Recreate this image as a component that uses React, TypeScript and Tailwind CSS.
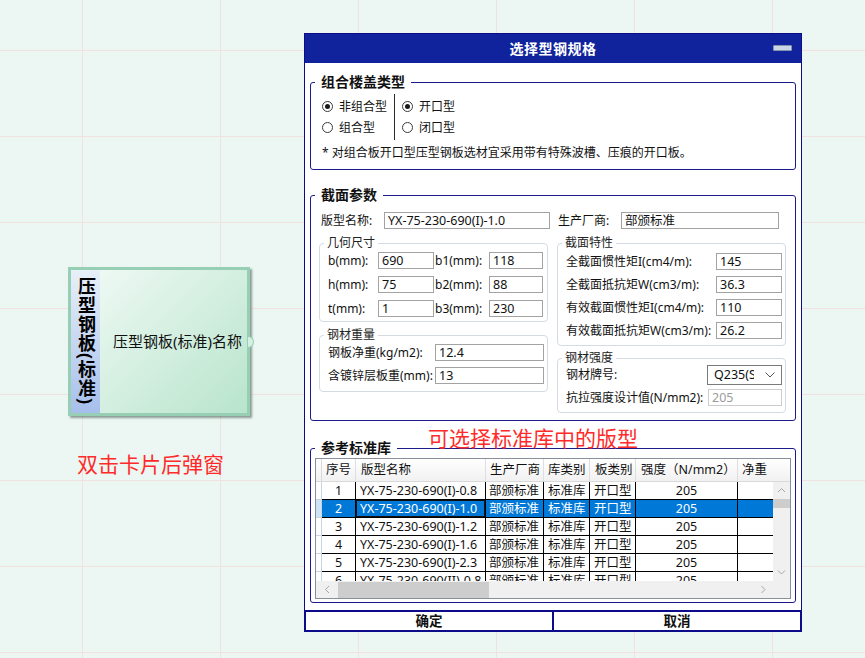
import React from "react";

const font = "font-['Noto_Sans','Noto_Sans_CJK_SC',sans-serif]";

type RowData = { no: number; name: string };

const rows: RowData[] = [
  { no: 1, name: "YX-75-230-690(I)-0.8" },
  { no: 2, name: "YX-75-230-690(I)-1.0" },
  { no: 3, name: "YX-75-230-690(I)-1.2" },
  { no: 4, name: "YX-75-230-690(I)-1.6" },
  { no: 5, name: "YX-75-230-690(I)-2.3" },
  { no: 6, name: "YX-75-230-690(II)-0.8" },
];

function Radio({ checked, label }: { checked?: boolean; label: string }) {
  return (
    <div className="flex items-center h-[21px] gap-[6px]">
      <span className="w-[11px] h-[11px] rounded-full border border-[#3a3a3a] bg-white flex items-center justify-center">
        {checked && <span className="w-[5px] h-[5px] rounded-full bg-[#1a1a1a]" />}
      </span>
      <span className="text-[12px] leading-[16px] text-[#111]">{label}</span>
    </div>
  );
}

function Input({ value, className, disabled }: { value: string; className: string; disabled?: boolean }) {
  return (
    <div
      className={`shrink-0 h-[17px] border bg-white px-[3px] text-[12.5px] leading-[15px] whitespace-nowrap overflow-hidden ${
        disabled ? "border-[#cccccc] text-[#9b9b9b]" : "border-[#a3a3a3] text-[#111]"
      } ${className}`}
    >
      {value}
    </div>
  );
}

// dark blue group box; the legend sits 5px in from the left border
function Group({ title, className, inner, children }: { title: string; className?: string; inner?: string; children: React.ReactNode }) {
  return (
    <fieldset className={`min-w-0 border border-[#1b1b8a] rounded-[3px] ${className ?? ""}`}>
      <legend className="ml-[4px] px-[6px] text-[14px] font-bold leading-[18px] text-[#111]">{title}</legend>
      <div className={inner}>{children}</div>
    </fieldset>
  );
}

function SubGroup({ title, className, inner, children }: { title: string; className?: string; inner?: string; children: React.ReactNode }) {
  return (
    <fieldset className={`min-w-0 border border-[#d4dbe4] rounded-[4px] ${className ?? ""}`}>
      <legend className="ml-[4px] px-[3px] text-[12px] leading-[14px] text-[#222]">{title}</legend>
      <div className={`pl-[8px] pr-[3px] ${inner ?? ""}`}>{children}</div>
    </fieldset>
  );
}

function Label({ text, className }: { text: string; className: string }) {
  return <span className={`shrink-0 text-[12px] leading-[16px] text-[#111] whitespace-nowrap ${className}`}>{text}</span>;
}

function Chevron({ dir }: { dir: "up" | "down" | "left" | "right" }) {
  const d = {
    up: "M1 5 L4.5 1.5 L8 5",
    down: "M1 1.5 L4.5 5 L8 1.5",
    left: "M5 1 L1.5 4.5 L5 8",
    right: "M1.5 1 L5 4.5 L1.5 8",
  }[dir];
  const vert = dir === "up" || dir === "down";
  return (
    <svg width={vert ? 9 : 7} height={vert ? 7 : 9} viewBox={vert ? "0 0 9 7" : "0 0 7 9"} fill="none">
      <path d={d} stroke="#a6a6a6" strokeWidth="1" />
    </svg>
  );
}

function Card() {
  return (
    <div className="absolute left-[68px] top-[267px] w-[182px] h-[149px] border-[3px] border-[#96cfb4] shadow-[2px_2px_2px_rgba(60,80,70,0.55)] flex bg-[linear-gradient(135deg,#f3fbf7,#b8e4cc)]">
      <div className="w-[29px] h-full bg-[linear-gradient(to_bottom,#e8f0f9,#a6bfeb)] flex items-center justify-center">
        <span className="[writing-mode:vertical-rl] text-[18px] font-bold leading-[29px] tracking-[1px] text-black">压型钢板(标准)</span>
      </div>
      <div className="flex-1 flex items-center pl-[13px] text-[15px] text-[#111]">压型钢板(标准)名称</div>
      <div className="absolute right-[-7px] top-[66px] w-[6px] h-[12px] rounded-r-full bg-[#d4f0e2] border border-l-0 border-[#96cfb4]" />
    </div>
  );
}

function Table() {
  return (
    <div className="w-full h-[141px] border border-[#8a9099] flex flex-col bg-white overflow-hidden">
      {/* header */}
      <div className="w-full h-[23px] flex shrink-0 bg-[linear-gradient(to_bottom,#ffffff,#f1f1f1)] border-b border-[#d9d9d9] text-[12.5px] text-[#111] whitespace-nowrap overflow-hidden">
        <div className="w-[6px] shrink-0 border-r border-[#d9d9d9]" />
        <div className="w-[34px] shrink-0 border-r border-[#dedede] pl-[4px] flex items-center">序号</div>
        <div className="w-[130px] shrink-0 border-r border-[#dedede] pl-[5px] flex items-center">版型名称</div>
        <div className="w-[58px] shrink-0 border-r border-[#dedede] pl-[4px] flex items-center">生产厂商</div>
        <div className="w-[46px] shrink-0 border-r border-[#dedede] pl-[4px] flex items-center">库类别</div>
        <div className="w-[46px] shrink-0 border-r border-[#dedede] pl-[5px] flex items-center">板类别</div>
        <div className="w-[102px] shrink-0 border-r border-[#dedede] pl-[5px] flex items-center">强度（N/mm2）</div>
        <div className="w-[60px] shrink-0 pl-[4px] flex items-center">净重</div>
      </div>
      <div className="flex h-[99px] shrink-0">
        <div className="w-[457px] shrink-0 overflow-hidden">
          {rows.map((r) => {
            const sel = r.no === 2;
            return (
              <div
                key={r.no}
                className={`flex h-[18px] w-[482px] text-[12.5px] leading-[17px] whitespace-nowrap ${
                  sel ? "bg-[#0078d7] text-white" : "bg-white text-[#111]"
                }`}
              >
                <div className={`w-[6px] shrink-0 border-r border-b border-[#c9d5e2] ${sel ? "bg-[#cfe3f6]" : "bg-white"}`} />
                <div className="w-[34px] shrink-0 border-r border-b border-black text-center">{r.no}</div>
                <div className={`w-[130px] shrink-0 border-r border-b border-black pl-[4px] ${sel ? "shadow-[inset_0_0_0_1px_#111]" : ""}`}>
                  {r.name}
                </div>
                <div className="w-[58px] shrink-0 border-r border-b border-black pl-[3px]">部颁标准</div>
                <div className="w-[46px] shrink-0 border-r border-b border-black pl-[4px]">标准库</div>
                <div className="w-[46px] shrink-0 border-r border-b border-black pl-[4px]">开口型</div>
                <div className="w-[102px] shrink-0 border-r border-b border-black text-center">205</div>
                <div className="w-[60px] shrink-0 border-b border-black" />
              </div>
            );
          })}
        </div>
        <div className="flex-1 bg-[#f0f0f0] flex flex-col items-center">
          <div className="h-[17px] flex items-center justify-center">
            <Chevron dir="up" />
          </div>
          <div className="w-[17px] h-[9px] bg-[#cdcdcd]" />
          <div className="flex-1" />
          <div className="h-[17px] flex items-center justify-center">
            <Chevron dir="down" />
          </div>
        </div>
      </div>
      <div className="flex h-[17px] shrink-0 bg-[#f0f0f0]">
        <div className="w-[457px] shrink-0 flex items-center">
          <div className="w-[22px] flex justify-center">
            <Chevron dir="left" />
          </div>
          <div className="w-[151px] h-[16px] bg-[#cdcdcd]" />
          <div className="flex-1" />
          <div className="w-[20px] flex justify-center">
            <Chevron dir="right" />
          </div>
        </div>
        <div className="flex-1 bg-[#f0f0f0]" />
      </div>
    </div>
  );
}

function Dialog() {
  return (
    <div className="absolute left-[304px] top-[33px] w-[498px] h-[599px] border border-[#0c0c8a] bg-white flex flex-col">
      {/* title bar */}
      <div className="relative h-[29px] shrink-0 bg-[#10239c] flex items-center justify-center">
        <span className="text-[14px] font-bold text-white tracking-[0.5px]">选择型钢规格</span>
        <div className="absolute right-[9px] top-[11px] w-[19px] h-[6px] rounded-[1px] bg-[#c9d6e6] border border-[#8594ad]" />
      </div>

      <div className="flex-1 min-w-0 flex flex-col px-[5px]">
        {/* 组合楼盖类型 */}
        <Group title="组合楼盖类型" className="mt-[10px]" inner="pl-[11px] pb-[8px]">
          <div className="flex pt-[5px]">
            <div className="flex flex-col w-[72px]">
              <Radio checked label="非组合型" />
              <Radio label="组合型" />
            </div>
            <div className="w-px bg-[#2a2a2a] my-[-2px]" />
            <div className="flex flex-col pl-[7px]">
              <Radio checked label="开口型" />
              <Radio label="闭口型" />
            </div>
          </div>
          <div className="mt-[7px] text-[12px] leading-[16px] text-[#111]">
            * 对组合板开口型压型钢板选材宜采用带有特殊波槽、压痕的开口板。
          </div>
        </Group>

        {/* 截面参数 */}
        <Group title="截面参数" className="mt-[16px]" inner="px-[8px] pb-[7px]">
          <div className="flex mt-[8px] items-center">
            <div className="w-[238px] flex items-center">
              <Label text="版型名称:" className="w-[65px] pl-[2px]" />
              <Input value="YX-75-230-690(I)-1.0" className="w-[166px]" />
            </div>
            <div className="flex items-center">
              <Label text="生产厂商:" className="w-[64px] pl-[1px]" />
              <Input value="部颁标准" className="w-[158px]" />
            </div>
          </div>

          <div className="flex gap-[9px] mt-[7px] items-start">
            {/* left column */}
            <div className="w-[229px] flex flex-col">
              <SubGroup title="几何尺寸" inner="pt-[2px] pb-[4px]">
                <div className="flex flex-col gap-[7px]">
                  {[
                    ["b(mm):", "690", "b1(mm):", "118"],
                    ["h(mm):", "75", "b2(mm):", "88"],
                    ["t(mm):", "1", "b3(mm):", "230"],
                  ].map((r) => (
                    <div key={r[0]} className="flex items-center">
                      <Label text={r[0]} className="w-[50px]" />
                      <Input value={r[1]} className="w-[56px]" />
                      <Label text={r[2]} className="w-[55px] pl-[1px]" />
                      <Input value={r[3]} className="w-[54px]" />
                    </div>
                  ))}
                </div>
              </SubGroup>
              <SubGroup title="钢材重量" className="mt-[6px]" inner="pt-[2px] pb-[7px]">
                <div className="flex flex-col gap-[6px]">
                  <div className="flex items-center">
                    <Label text="钢板净重(kg/m2):" className="w-[107px]" />
                    <Input value="12.4" className="w-[109px]" />
                  </div>
                  <div className="flex items-center">
                    <Label text="含镀锌层板重(mm):" className="w-[107px]" />
                    <Input value="13" className="w-[109px]" />
                  </div>
                </div>
              </SubGroup>
            </div>

            {/* right column */}
            <div className="w-[229px] flex flex-col">
              <SubGroup title="截面特性" inner="pt-[3px] pb-[6px]">
                <div className="flex flex-col gap-[6px]">
                  {[
                    ["全截面惯性矩I(cm4/m):", "145"],
                    ["全截面抵抗矩W(cm3/m):", "36.3"],
                    ["有效截面惯性矩I(cm4/m):", "110"],
                    ["有效截面抵抗矩W(cm3/m):", "26.2"],
                  ].map((r) => (
                    <div key={r[0]} className="flex items-center">
                      <Label text={r[0]} className="w-[150px]" />
                      <Input value={r[1]} className="w-[66px]" />
                    </div>
                  ))}
                </div>
              </SubGroup>
              <SubGroup title="钢材强度" className="mt-[5px]" inner="pb-[6px]">
                <div className="flex items-center">
                  <Label text="钢材牌号:" className="w-[141px]" />
                  <div className="shrink-0 w-[75px] h-[20px] border border-[#7a7a7a] bg-white flex items-center pl-[6px] pr-[6px]">
                    <span className="w-[40px] overflow-hidden whitespace-nowrap text-[12.5px] leading-[16px] text-[#111]">Q235(S</span>
                    <span className="flex-1" />
                    <svg width="10" height="6" viewBox="0 0 10 6" fill="none">
                      <path d="M0.5 0.5 L5 5 L9.5 0.5" stroke="#555" strokeWidth="1" />
                    </svg>
                  </div>
                </div>
                <div className="flex items-center mt-[4px]">
                  <Label text="抗拉强度设计值(N/mm2):" className="w-[142px]" />
                  <Input value="205" disabled className="w-[74px]" />
                </div>
              </SubGroup>
            </div>
          </div>
        </Group>

        {/* 参考标准库 */}
        <Group title="参考标准库" className="mt-[18px]" inner="px-[4px] pt-[1px] pb-[3px]">
          <Table />
        </Group>

        {/* buttons */}
        <div className="mt-auto -mx-[5px] h-[21px] shrink-0 flex border-t-2 border-b border-x border-[#0c0c8a]">
          <div className="w-[248px] border-r-2 border-[#0c0c8a] flex items-center justify-center text-[13.5px] font-bold text-[#111]">确定</div>
          <div className="flex-1 flex items-center justify-center text-[13.5px] font-bold text-[#111]">取消</div>
        </div>
      </div>
    </div>
  );
}

export default function App() {
  return (
    <div
      className={`relative w-[865px] h-[658px] overflow-hidden bg-[#ecf7f3] bg-[linear-gradient(to_right,#f1e1e1_1px,transparent_1px),linear-gradient(to_bottom,#f1e1e1_1px,transparent_1px)] [background-size:138px_86px] [background-position:82px_50px] ${font}`}
    >
      <Card />
      <div className="absolute left-[77px] top-[452px] text-[21px] leading-[24px] text-[#ff2b2b]">双击卡片后弹窗</div>
      <Dialog />
      <div className="absolute left-[428px] top-[426px] text-[21px] leading-[24px] text-[#ff2b2b]">可选择标准库中的版型</div>
    </div>
  );
}
